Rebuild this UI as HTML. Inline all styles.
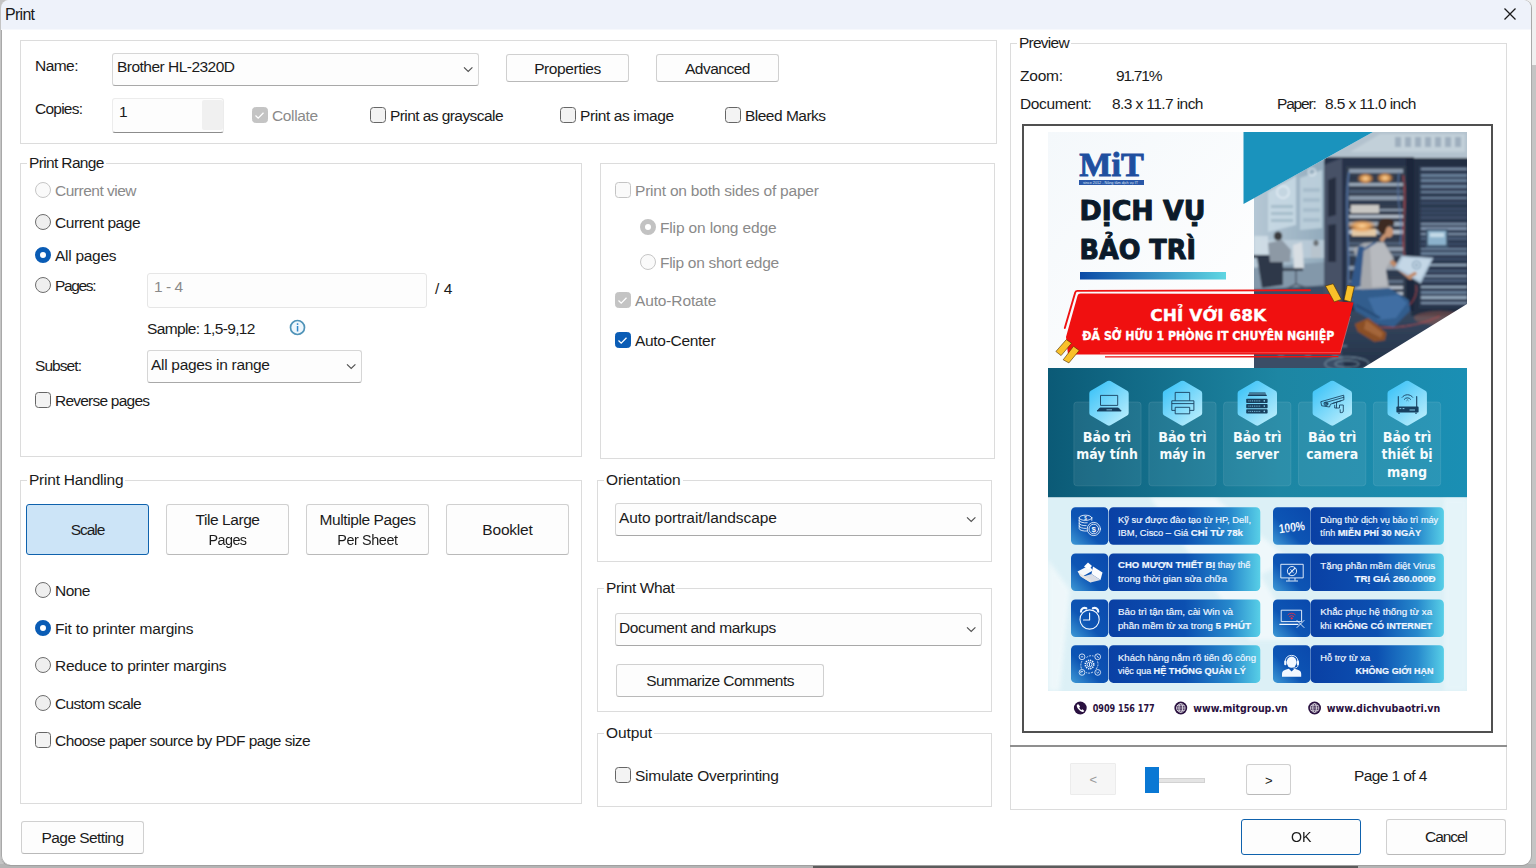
<!DOCTYPE html>
<html lang="en">
<head>
<meta charset="utf-8">
<title>Print</title>
<style>
*{box-sizing:border-box;margin:0;padding:0}
html,body{width:1536px;height:868px;overflow:hidden;background:#c4c4c4}
body{font-family:"Liberation Sans","DejaVu Sans",sans-serif;font-size:15px;color:#1a1a1a;position:relative}
.abs{position:absolute}
#desk-r{left:1522px;top:0;width:14px;height:65px;background:#f0f0f0}
#win{left:1px;top:0;width:1530px;height:865px;background:#fff;border-radius:8px 8px 9px 9px;overflow:hidden;box-shadow:inset 1px 0 0 #a9a9a9,1px 0 0 #a9a9a9,0 1px 0 #a0a0a0}
#title{left:0;top:0;width:1531px;height:29px;background:#eef2fa}
.t{position:absolute;white-space:nowrap;line-height:20px;height:20px;font-size:15.5px;letter-spacing:-0.35px;color:#1b1b1b}
.g{color:#8a8a8a}
.grp{position:absolute;border:1px solid #dcdcdc}
.gl{position:absolute;background:#fff;padding:0 2px;white-space:nowrap;line-height:20px;height:20px;font-size:15.5px;letter-spacing:-0.35px;color:#1b1b1b}
.btn{position:absolute;border:1px solid #d0d0d0;border-bottom-color:#b9b9b9;border-radius:3px;background:#fdfdfd;text-align:center;font-size:15.5px;letter-spacing:-0.35px;color:#1b1b1b;white-space:nowrap}
.dd{position:absolute;border:1px solid #d6d6d6;border-bottom-color:#a8a8a8;border-radius:3px;background:#fdfdfd}
.cb{position:absolute;width:16px;height:16px;margin-top:-1px;border:1px solid #666;border-radius:3.5px;background:#f3f3f3}
.cb.dis{border-color:#c4c4c4;background:#fafafa}
.cb.chk{background:#0a5cb5;border-color:#0a5cb5}
.cb.dchk{background:#c4c4c4;border-color:#c4c4c4}
.rd{position:absolute;width:16px;height:16px;border:1px solid #6e6e6e;border-radius:50%;background:#efefef}
.rd.dis{border-color:#c6c6c6;background:#fafafa}
.rd.on{border:5px solid #0a5cb5;background:#fff}
.rd.don{border:5px solid #c2c2c2;background:#fff}
svg{position:absolute;overflow:visible}
</style>
</head>
<body>
<div class="abs" id="desk-r"></div>
<div class="abs" style="left:0;top:864px;width:1536px;height:4px;background:#b4b4b4"></div>
<div class="abs" style="left:813px;top:864px;width:545px;height:4px;background:#5c5c5c"></div>
<div class="abs" id="win">
<div class="abs" id="title"></div>
<div class="abs" style="left:0;top:29px;width:1531px;height:1px;background:#f6f8fc"></div>
<div class="t" style="left:4px;top:5px;font-size:16px;letter-spacing:-0.72px">Print</div>
<svg style="left:1503px;top:8px" width="12" height="12" viewBox="0 0 12 12"><path d="M0.5 0.5L11.5 11.5M11.5 0.5L0.5 11.5" stroke="#1a1a1a" stroke-width="1.3" fill="none"/></svg>

<!-- top group -->
<div class="grp" style="left:19px;top:40px;width:977px;height:104px"></div>
<div class="t" style="left:34px;top:56px;letter-spacing:-0.54px">Name:</div>
<div class="dd" style="left:111px;top:53px;width:367px;height:33px"></div>
<div class="t" style="left:116px;top:57px;letter-spacing:-0.52px">Brother HL-2320D</div>
<svg style="left:461px;top:65px" width="12" height="8" viewBox="0 0 12 8"><path d="M2 2.3L6.2 6.5L10.4 2.3" stroke="#505050" stroke-width="1.15" fill="none"/></svg>
<div class="btn" style="left:505px;top:54px;width:123px;height:28px;line-height:27px;letter-spacing:-0.4px">Properties</div>
<div class="btn" style="left:655px;top:54px;width:123px;height:28px;line-height:27px;letter-spacing:-0.49px">Advanced</div>
<div class="t" style="left:34px;top:99px;letter-spacing:-0.76px">Copies:</div>
<div class="dd" style="left:111px;top:98px;width:112px;height:35px;border-color:#ececec;border-bottom-color:#8c8c8c"></div>
<div class="abs" style="left:201px;top:100px;width:21px;height:30px;background:#f0f0f0;border-radius:2px"></div>
<div class="t" style="left:118px;top:102px">1</div>
<div class="cb dchk" style="left:251px;top:108px"></div>
<svg style="left:253px;top:111px" width="11" height="9" viewBox="0 0 11 9"><path d="M1.5 4.5L4.2 7.2L9.5 1.8" stroke="#fff" stroke-width="1.3" fill="none"/></svg>
<div class="t g" style="left:271px;top:106px;letter-spacing:-0.37px">Collate</div>
<div class="cb" style="left:369px;top:108px"></div>
<div class="t" style="left:389px;top:106px;letter-spacing:-0.57px">Print as grayscale</div>
<div class="cb" style="left:559px;top:108px"></div>
<div class="t" style="left:579px;top:106px;letter-spacing:-0.39px">Print as image</div>
<div class="cb" style="left:724px;top:108px"></div>
<div class="t" style="left:744px;top:106px;letter-spacing:-0.51px">Bleed Marks</div>

<!-- Print Range -->
<div class="grp" style="left:19px;top:163px;width:562px;height:294px"></div>
<div class="gl" style="left:26px;top:153px;letter-spacing:-0.64px">Print Range</div>
<div class="rd dis" style="left:34px;top:182px"></div>
<div class="t g" style="left:54px;top:181px;letter-spacing:-0.5px">Current view</div>
<div class="rd" style="left:34px;top:214px"></div>
<div class="t" style="left:54px;top:213px;letter-spacing:-0.45px">Current page</div>
<div class="rd on" style="left:34px;top:247px"></div>
<div class="t" style="left:54px;top:246px;letter-spacing:-0.28px">All pages</div>
<div class="rd" style="left:34px;top:277px"></div>
<div class="t" style="left:54px;top:276px;letter-spacing:-1.35px">Pages:</div>
<div class="dd" style="left:146px;top:273px;width:280px;height:35px;border-color:#e6e6e6;background:#fdfdfd"></div>
<div class="t g" style="left:153px;top:277px;letter-spacing:-0.5px">1 - 4</div>
<div class="t" style="left:434px;top:279px;letter-spacing:0.13px">/ 4</div>
<div class="t" style="left:146px;top:319px;letter-spacing:-0.64px">Sample: 1,5-9,12</div>
<svg style="left:288px;top:319px" width="17" height="17" viewBox="0 0 17 17"><circle cx="8.5" cy="8.5" r="7" fill="#eef7fd" stroke="#4f93b8" stroke-width="1.7"/><rect x="7.8" y="7" width="1.5" height="5.5" fill="#2f86c9"/><rect x="7.8" y="4.3" width="1.5" height="1.6" fill="#2f86c9"/></svg>
<div class="t" style="left:34px;top:356px;letter-spacing:-0.93px">Subset:</div>
<div class="dd" style="left:146px;top:350px;width:215px;height:33px"></div>
<div class="t" style="left:150px;top:355px;letter-spacing:-0.3px">All pages in range</div>
<svg style="left:344px;top:362px" width="12" height="8" viewBox="0 0 12 8"><path d="M2 2.3L6.2 6.5L10.4 2.3" stroke="#505050" stroke-width="1.15" fill="none"/></svg>
<div class="cb" style="left:34px;top:393px"></div>
<div class="t" style="left:54px;top:391px;letter-spacing:-0.77px">Reverse pages</div>

<!-- Duplex group -->
<div class="grp" style="left:599px;top:163px;width:395px;height:296px"></div>
<div class="cb dis" style="left:614px;top:183px"></div>
<div class="t g" style="left:634px;top:181px;letter-spacing:-0.21px">Print on both sides of paper</div>
<div class="rd don" style="left:639px;top:219px"></div>
<div class="t g" style="left:659px;top:218px;letter-spacing:-0.15px">Flip on long edge</div>
<div class="rd dis" style="left:639px;top:254px"></div>
<div class="t g" style="left:659px;top:253px;letter-spacing:-0.29px">Flip on short edge</div>
<div class="cb dchk" style="left:614px;top:293px"></div>
<svg style="left:616px;top:296px" width="11" height="9" viewBox="0 0 11 9"><path d="M1.5 4.5L4.2 7.2L9.5 1.8" stroke="#fff" stroke-width="1.3" fill="none"/></svg>
<div class="t g" style="left:634px;top:291px;letter-spacing:-0.14px">Auto-Rotate</div>
<div class="cb chk" style="left:614px;top:333px"></div>
<svg style="left:616px;top:336px" width="11" height="9" viewBox="0 0 11 9"><path d="M1.5 4.5L4.2 7.2L9.5 1.8" stroke="#fff" stroke-width="1.3" fill="none"/></svg>
<div class="t" style="left:634px;top:331px;letter-spacing:-0.3px">Auto-Center</div>

<!-- Print Handling -->
<div class="grp" style="left:19px;top:480px;width:562px;height:324px"></div>
<div class="gl" style="left:26px;top:470px;letter-spacing:-0.22px">Print Handling</div>
<div class="btn" style="left:25px;top:504px;width:123px;height:51px;line-height:49px;background:#cce4f7;border-color:#0f62ad;letter-spacing:-1.07px">Scale</div>
<div class="btn" style="left:165px;top:504px;width:123px;height:51px;line-height:20px;padding-top:5px;letter-spacing:-0.43px">Tile Large<br><span style="display:inline-block;letter-spacing:-0.6px;transform:scaleX(0.93)">Pages</span></div>
<div class="btn" style="left:305px;top:504px;width:123px;height:51px;line-height:20px;padding-top:5px;letter-spacing:-0.4px">Multiple Pages<br><span style="display:inline-block;letter-spacing:-0.45px;transform:scaleX(0.93)">Per Sheet</span></div>
<div class="btn" style="left:445px;top:504px;width:123px;height:51px;line-height:49px;letter-spacing:-0.2px">Booklet</div>
<div class="rd" style="left:34px;top:582px"></div>
<div class="t" style="left:54px;top:581px;letter-spacing:-0.52px">None</div>
<div class="rd on" style="left:34px;top:620px"></div>
<div class="t" style="left:54px;top:619px;letter-spacing:-0.17px">Fit to printer margins</div>
<div class="rd" style="left:34px;top:657px"></div>
<div class="t" style="left:54px;top:656px;letter-spacing:-0.28px">Reduce to printer margins</div>
<div class="rd" style="left:34px;top:695px"></div>
<div class="t" style="left:54px;top:694px;letter-spacing:-0.67px">Custom scale</div>
<div class="cb" style="left:34px;top:733px"></div>
<div class="t" style="left:54px;top:731px;letter-spacing:-0.55px">Choose paper source by PDF page size</div>

<!-- Orientation -->
<div class="grp" style="left:596px;top:480px;width:395px;height:82px"></div>
<div class="gl" style="left:603px;top:470px;letter-spacing:-0.12px">Orientation</div>
<div class="dd" style="left:614px;top:503px;width:367px;height:33px"></div>
<div class="t" style="left:618px;top:508px;letter-spacing:-0.07px">Auto portrait/landscape</div>
<svg style="left:964px;top:515px" width="12" height="8" viewBox="0 0 12 8"><path d="M2 2.3L6.2 6.5L10.4 2.3" stroke="#505050" stroke-width="1.15" fill="none"/></svg>

<!-- Print What -->
<div class="grp" style="left:596px;top:588px;width:395px;height:124px"></div>
<div class="gl" style="left:603px;top:578px;letter-spacing:-0.39px">Print What</div>
<div class="dd" style="left:614px;top:613px;width:367px;height:33px"></div>
<div class="t" style="left:618px;top:618px;letter-spacing:-0.38px">Document and markups</div>
<svg style="left:964px;top:625px" width="12" height="8" viewBox="0 0 12 8"><path d="M2 2.3L6.2 6.5L10.4 2.3" stroke="#505050" stroke-width="1.15" fill="none"/></svg>
<div class="btn" style="left:615px;top:664px;width:208px;height:33px;line-height:31px;letter-spacing:-0.55px">Summarize Comments</div>

<!-- Output -->
<div class="grp" style="left:596px;top:733px;width:395px;height:74px"></div>
<div class="gl" style="left:603px;top:723px;letter-spacing:-0.07px">Output</div>
<div class="cb" style="left:614px;top:768px;background:#f3f3f3"></div>
<div class="t" style="left:634px;top:766px;letter-spacing:-0.26px">Simulate Overprinting</div>

<!-- bottom buttons -->
<div class="btn" style="left:20px;top:821px;width:123px;height:33px;line-height:31px;letter-spacing:-0.57px">Page Setting</div>
<div class="btn" style="left:1240px;top:819px;width:120px;height:36px;line-height:34px;border-color:#0f62ad;letter-spacing:0"><span style="display:inline-block;transform:scaleX(0.915)">OK</span></div>
<div class="btn" style="left:1385px;top:819px;width:120px;height:36px;line-height:34px;letter-spacing:-1.05px">Cancel</div>

<!-- Preview group -->
<div class="grp" style="left:1009px;top:43px;width:497px;height:767px"></div>
<div class="gl" style="left:1016px;top:33px;letter-spacing:-0.75px">Preview</div>
<div class="t" style="left:1019px;top:66px;letter-spacing:-0.23px">Zoom:</div>
<div class="t" style="left:1115px;top:66px;letter-spacing:-1.23px">91.71%</div>
<div class="t" style="left:1019px;top:94px;letter-spacing:-0.38px">Document:</div>
<div class="t" style="left:1111px;top:94px;letter-spacing:-0.59px">8.3 x 11.7 inch</div>
<div class="t" style="left:1276px;top:94px;letter-spacing:-1.17px">Paper:</div>
<div class="t" style="left:1324px;top:94px;letter-spacing:-0.59px">8.5 x 11.0 inch</div>
<div class="abs" style="left:1021px;top:124px;width:471px;height:609px;border:2px solid #505050;background:#fff"></div>
<!--PV-START-->
<svg style="left:1047px;top:132px" width="419" height="590" viewBox="1048 132 419 590" font-family="'Liberation Sans','DejaVu Sans',sans-serif">
<defs>
<linearGradient id="gBar" x1="0" x2="1" y1="0" y2="0"><stop offset="0" stop-color="#0b4aa6"/><stop offset="1" stop-color="#5fd6e2"/></linearGradient>
<linearGradient id="gBand" x1="0" x2="1" y1="0" y2="0"><stop offset="0" stop-color="#0b5a76"/><stop offset="0.55" stop-color="#1d86a3"/><stop offset="1" stop-color="#1a8fb4"/></linearGradient>
<linearGradient id="gHex" x1="0.1" x2="0.9" y1="0" y2="1"><stop offset="0" stop-color="#3fc4f8"/><stop offset="1" stop-color="#b6ecfc"/></linearGradient>
<linearGradient id="gPill" x1="0" x2="1" y1="0" y2="0"><stop offset="0" stop-color="#0a40a4"/><stop offset="0.5" stop-color="#0c50b1"/><stop offset="0.8" stop-color="#2688cc"/><stop offset="1" stop-color="#58cfe7"/></linearGradient>
<linearGradient id="gIco" x1="1" x2="0" y1="0" y2="1"><stop offset="0" stop-color="#0a49ad"/><stop offset="0.6" stop-color="#0d55b4"/><stop offset="1" stop-color="#3f9ad6"/></linearGradient>
<linearGradient id="gTop" x1="0" x2="1" y1="0" y2="1"><stop offset="0" stop-color="#f4f8fb"/><stop offset="1" stop-color="#ffffff"/></linearGradient>
<filter id="b1" x="-10%" y="-10%" width="120%" height="120%"><feGaussianBlur stdDeviation="0.8"/></filter>
<filter id="b2" x="-10%" y="-10%" width="120%" height="120%"><feGaussianBlur stdDeviation="2"/></filter>
<clipPath id="cPhoto"><polygon points="1254,198 1373,132 1467,132 1467,304 1363,368 1254,368"/></clipPath>
</defs>
<rect x="1048" y="132" width="419" height="590" fill="#fff"/>
<rect x="1048" y="132" width="206" height="236" fill="url(#gTop)"/>
<g clip-path="url(#cPhoto)">
<defs><linearGradient id="gFloor" x1="0" x2="0" y1="0" y2="1"><stop offset="0" stop-color="#45586f"/><stop offset="1" stop-color="#223047"/></linearGradient><linearGradient id="gWall" x1="0" x2="1" y1="0" y2="0"><stop offset="0" stop-color="#b7c9d6"/><stop offset="1" stop-color="#8fa8ba"/></linearGradient><radialGradient id="gGlow"><stop offset="0" stop-color="#ffd9a0"/><stop offset="0.5" stop-color="#f2a352" stop-opacity="0.85"/><stop offset="1" stop-color="#e08030" stop-opacity="0"/></radialGradient></defs>
<g filter="url(#b1)">
<rect x="1250" y="128" width="221" height="244" fill="#93abbc"/>
<polygon points="1250,128 1471,128 1471,160 1330,160 1250,205" fill="#b3c2ce"/>
<polygon points="1380,134 1465,134 1465,152 1350,152" fill="#c6d3dc" opacity="0.8"/>
<rect x="1395" y="137" width="6" height="10" fill="#8ea0b0" opacity="0.7"/>
<rect x="1405" y="137" width="6" height="10" fill="#8ea0b0" opacity="0.7"/>
<rect x="1415" y="137" width="6" height="10" fill="#8ea0b0" opacity="0.7"/>
<rect x="1425" y="137" width="6" height="10" fill="#8ea0b0" opacity="0.7"/>
<rect x="1435" y="137" width="6" height="10" fill="#8ea0b0" opacity="0.7"/>
<rect x="1445" y="137" width="6" height="10" fill="#8ea0b0" opacity="0.7"/>
<rect x="1455" y="137" width="6" height="10" fill="#8ea0b0" opacity="0.7"/>
<rect x="1250" y="160" width="80" height="135" fill="url(#gWall)"/>
<polygon points="1268,192 1296,176 1296,225 1268,232" fill="#c9dae5" opacity="0.85"/>
<polygon points="1300,178 1322,170 1322,228 1300,230" fill="#bfd2de" opacity="0.85"/>
<circle cx="1283" cy="192" r="6" fill="none" stroke="#e6f0f6" stroke-width="1.5" opacity="0.9"/>
<circle cx="1312" cy="172" r="3.5" fill="none" stroke="#e6f0f6" stroke-width="1.2" opacity="0.9"/>
<rect x="1271" y="205" width="22" height="3" fill="#9fb6c6" opacity="0.8"/>
<rect x="1271" y="212" width="22" height="3" fill="#9fb6c6" opacity="0.8"/>
<rect x="1271" y="219" width="22" height="3" fill="#9fb6c6" opacity="0.8"/>
<rect x="1303" y="188" width="17" height="4" fill="#a3b9c8" opacity="0.8"/>
<rect x="1303" y="198" width="17" height="4" fill="#a3b9c8" opacity="0.8"/>
<rect x="1303" y="208" width="17" height="4" fill="#a3b9c8" opacity="0.8"/>
<rect x="1303" y="218" width="17" height="4" fill="#a3b9c8" opacity="0.8"/>
<rect x="1254" y="240" width="70" height="18" fill="#c3d3de" opacity="0.7"/>
<polygon points="1250,284 1330,270 1471,300 1471,372 1250,372" fill="url(#gFloor)"/>
<polygon points="1250,268 1325,262 1325,300 1250,300" fill="#8398aa"/>
<polygon points="1250,290 1330,285 1345,372 1250,372" fill="#3b4d66"/>
<ellipse cx="1347" cy="364" rx="22" ry="7" fill="none" stroke="#9fc0d0" stroke-width="0.9" opacity="0.8"/>
<ellipse cx="1347" cy="364" rx="12" ry="3.6" fill="none" stroke="#9fc0d0" stroke-width="0.8" opacity="0.8"/>
<rect x="1260" y="345" width="6" height="2" fill="#7f96ab" opacity="0.55"/>
<rect x="1269" y="350" width="6" height="2" fill="#7f96ab" opacity="0.55"/>
<rect x="1278" y="355" width="6" height="2" fill="#7f96ab" opacity="0.55"/>
<rect x="1287" y="345" width="6" height="2" fill="#7f96ab" opacity="0.55"/>
<rect x="1296" y="350" width="6" height="2" fill="#7f96ab" opacity="0.55"/>
<rect x="1305" y="355" width="6" height="2" fill="#7f96ab" opacity="0.55"/>
<rect x="1314" y="345" width="6" height="2" fill="#7f96ab" opacity="0.55"/>
<rect x="1323" y="350" width="6" height="2" fill="#7f96ab" opacity="0.55"/>
<rect x="1332" y="355" width="6" height="2" fill="#7f96ab" opacity="0.55"/>
<rect x="1341" y="345" width="6" height="2" fill="#7f96ab" opacity="0.55"/>
<rect x="1250" y="255" width="34" height="3" fill="#2b3646"/>
<rect x="1254" y="236" width="14" height="18" fill="#cfdde6" opacity="0.9"/>
<polygon points="1257,258 1283,258 1283,285 1262,288" fill="#2d3848"/>
<polygon points="1268,243 1282,240 1291,250 1290,262 1270,262" fill="#8d99a5"/>
<ellipse cx="1278" cy="236" rx="4.2" ry="4.6" fill="#3b3a3c"/>
<polygon points="1293,245 1302,242 1304,268 1294,270" fill="#d8dee3"/>
<rect x="1283" y="268" width="20" height="3" fill="#3a4656"/>
<path d="M1296,271 L1296,285 M1286,289 L1296,284 L1307,288" stroke="#4a5666" stroke-width="1.4" fill="none"/>
<ellipse cx="1316" cy="243" rx="2.6" ry="3" fill="#6b6e72"/><rect x="1311" y="246" width="10" height="12" fill="#b8c4cd"/>
<rect x="1411" y="158" width="60" height="158" fill="#222d42"/>
<rect x="1419" y="166" width="52" height="142" fill="#2a3850"/>
<rect x="1421" y="168.0" width="46" height="2" fill="#8499b0" opacity="0.9"/>
<rect x="1421" y="174.0" width="46" height="3" fill="#6f86a0" opacity="0.9"/>
<rect x="1421" y="179.0" width="46" height="3" fill="#6f86a0" opacity="0.9"/>
<rect x="1421" y="185.0" width="46" height="3" fill="#6f86a0" opacity="0.9"/>
<rect x="1421" y="191.0" width="46" height="2" fill="#6f86a0" opacity="0.9"/>
<rect x="1421" y="197.0" width="46" height="2" fill="#6f86a0" opacity="0.9"/>
<rect x="1421" y="202.0" width="46" height="2" fill="#3f5069" opacity="0.9"/>
<rect x="1421" y="208.0" width="46" height="2" fill="#3f5069" opacity="0.9"/>
<rect x="1421" y="212.0" width="46" height="2" fill="#3f5069" opacity="0.9"/>
<rect x="1421" y="216.0" width="46" height="3" fill="#3f5069" opacity="0.9"/>
<rect x="1421" y="223.0" width="46" height="2" fill="#8499b0" opacity="0.9"/>
<rect x="1421" y="227.0" width="46" height="3" fill="#8499b0" opacity="0.9"/>
<rect x="1421" y="233.0" width="46" height="2" fill="#8499b0" opacity="0.9"/>
<rect x="1421" y="237.0" width="46" height="3" fill="#4d607a" opacity="0.9"/>
<rect x="1421" y="243.0" width="46" height="2" fill="#3f5069" opacity="0.9"/>
<rect x="1421" y="248.0" width="46" height="2" fill="#6f86a0" opacity="0.9"/>
<rect x="1421" y="252.0" width="46" height="3" fill="#6f86a0" opacity="0.9"/>
<rect x="1421" y="258.0" width="46" height="2" fill="#3f5069" opacity="0.9"/>
<rect x="1421" y="264.0" width="46" height="2" fill="#9cb1c5" opacity="0.9"/>
<rect x="1421" y="270.0" width="46" height="2" fill="#4d607a" opacity="0.9"/>
<rect x="1421" y="275.0" width="46" height="2" fill="#8499b0" opacity="0.9"/>
<rect x="1421" y="279.0" width="46" height="3" fill="#4d607a" opacity="0.9"/>
<rect x="1421" y="286.0" width="46" height="2" fill="#9cb1c5" opacity="0.9"/>
<rect x="1421" y="291.0" width="46" height="3" fill="#6f86a0" opacity="0.9"/>
<rect x="1421" y="296.0" width="46" height="3" fill="#9cb1c5" opacity="0.9"/>
<rect x="1421" y="302.0" width="46" height="2" fill="#8499b0" opacity="0.9"/>
<rect x="1426" y="229" width="22" height="19" fill="#41566f"/>
<rect x="1428" y="231" width="18" height="14" fill="#8cb2cc"/>
<rect x="1430" y="233" width="14" height="4" fill="#c4dbe8"/>
<rect x="1324" y="157" width="90" height="154" fill="#263248"/>
<polygon points="1324,165 1342,158 1342,305 1324,296" fill="#465166"/>
<polygon points="1328,180 1336,177 1336,215 1328,217" fill="#272f40"/>
<polygon points="1328,225 1336,224 1336,262 1328,262" fill="#272f40"/>
<rect x="1346" y="166" width="60" height="138" fill="#323d50"/>
<rect x="1349" y="169.0" width="54" height="4" fill="#8a99ab"/>
<rect x="1349" y="177.0" width="54" height="2" fill="#2a3447"/>
<rect x="1349" y="183.0" width="54" height="3" fill="#9aa8b8"/>
<rect x="1349" y="190.0" width="54" height="3" fill="#4d5d74"/>
<rect x="1349" y="196.0" width="54" height="4" fill="#8a99ab"/>
<rect x="1349" y="202.0" width="54" height="3" fill="#2f3b4f"/>
<rect x="1349" y="209.0" width="54" height="2" fill="#8a99ab"/>
<rect x="1349" y="215.0" width="54" height="3" fill="#b0bac6"/>
<rect x="1349" y="222.0" width="54" height="4" fill="#9aa8b8"/>
<rect x="1349" y="230.0" width="54" height="4" fill="#b0bac6"/>
<rect x="1349" y="237.0" width="54" height="2" fill="#2f3b4f"/>
<rect x="1349" y="242.0" width="54" height="3" fill="#4d5d74"/>
<rect x="1349" y="247.0" width="54" height="4" fill="#8a99ab"/>
<rect x="1349" y="253.0" width="54" height="3" fill="#5f6f85"/>
<rect x="1349" y="260.0" width="54" height="3" fill="#2f3b4f"/>
<rect x="1349" y="266.0" width="54" height="4" fill="#8a99ab"/>
<rect x="1349" y="272.0" width="54" height="4" fill="#2f3b4f"/>
<rect x="1349" y="280.0" width="54" height="3" fill="#5f6f85"/>
<rect x="1349" y="286.0" width="54" height="3" fill="#b0bac6"/>
<rect x="1349" y="292.0" width="54" height="3" fill="#b0bac6"/>
<rect x="1349" y="298.0" width="54" height="3" fill="#5f6f85"/>
<rect x="1351" y="205" width="28" height="8" fill="#c9c8c4"/>
<rect x="1352" y="229" width="24" height="7" fill="#e3c9a6"/>
<path d="M1349,172 C1343,210 1352,250 1347,298" stroke="#5577aa" stroke-width="1.5" fill="none"/>
<path d="M1403,175 C1408,200 1400,230 1405,262" stroke="#b04040" stroke-width="1" fill="none"/>
<path d="M1399,172 C1395,200 1404,220 1400,245" stroke="#5577aa" stroke-width="1" fill="none"/>
<ellipse cx="1365.5" cy="178.5" rx="9" ry="6" fill="url(#gGlow)"/>
<ellipse cx="1385" cy="178" rx="9" ry="6" fill="url(#gGlow)"/>
<ellipse cx="1362" cy="226" rx="15" ry="6.5" fill="url(#gGlow)"/>
<rect x="1406" y="158" width="8" height="153" fill="#1e283b"/>
<ellipse cx="1440" cy="318" rx="26" ry="7" fill="#c46a50" opacity="0.35"/>
<path d="M1416,285 C1420,305 1395,318 1372,326 C1390,330 1420,326 1440,316" stroke="#c24a4a" stroke-width="0.8" fill="none"/>
<polygon points="1349.6,289.4 1389.3,287.9 1408.8,299.9 1410.3,310.4 1393.8,326.9 1377.3,323.9 1354.8,310.4" fill="#335d8d"/>
<polygon points="1368,298 1398,295 1407,303 1396,318 1378,320" fill="#3f6ea3"/>
<path d="M1356,305 L1380,318" stroke="#274a75" stroke-width="2" fill="none"/>
<polygon points="1354.8,323.9 1368.3,317.9 1386.3,332.9 1384.8,340.3 1374.3,341.8 1357.8,331.4" fill="#8b4f28"/>
<polygon points="1366,320 1383,333 1381,338 1364,329" fill="#a4663a"/>
<polygon points="1353.3,249 1363.8,243 1383.3,241.5 1393.8,258 1392.3,268.5 1385.5,268.5 1389.3,287.9 1360.8,289.4 1357.8,262.5" fill="#a5a8ad"/>
<polygon points="1370,244 1384,243 1392,258 1386,268 1387,286 1372,287" fill="#b7babf"/>
<polygon points="1358.5,246 1364,246.5 1360.2,286.5 1349.8,289.4" fill="#31598a"/>
<path d="M1376,242 L1363,250" stroke="#31598a" stroke-width="2"/>
<path d="M1392.3,262.5 L1410.3,277.4" stroke="#c08a68" stroke-width="4.4" stroke-linecap="round"/>
<ellipse cx="1388.6" cy="232" rx="4.6" ry="5.6" fill="#c6926f"/>
<path d="M1381,241 L1386,234" stroke="#c6926f" stroke-width="4"/>
<path d="M1377.5,229 C1376,218 1388,215 1393.5,221 C1395,224 1394,226 1392,226 C1388,225 1386,227 1385,234 C1381,235 1378.5,233 1377.5,229 Z" fill="#3d2b22"/>
<polygon points="1401.3,255.7 1433.5,257.7 1420.7,283.4 1394.5,267.7" fill="#a9c0d4"/>
<polygon points="1403,257.5 1431,259.3 1420,280.5 1397.5,267.3" fill="#c4d7e6"/>
<circle cx="1416.5" cy="265" r="4" fill="none" stroke="#7d9ab2" stroke-width="1"/>
<circle cx="1416.5" cy="265" r="1.6" fill="#8fa9be"/>
<path d="M1409,277 L1415,273.5" stroke="#c08a68" stroke-width="3.4" stroke-linecap="round"/>
</g></g>
<polygon points="1243.5,132 1373,132 1243.5,204" fill="#1a93bd"/>
<text x="1079.3" y="175.6" font-family="'Liberation Serif','DejaVu Serif',serif" font-weight="bold" font-size="33" fill="#1f4f9f" stroke="#1f4f9f" stroke-width="0.9" textLength="64.5" lengthAdjust="spacingAndGlyphs">MiT</text>
<rect x="1079" y="180" width="65" height="5" fill="#2a58a8"/>
<text x="1083" y="184" font-family="Liberation Sans,sans-serif" font-size="3.6" fill="#dfe8f6" textLength="55" lengthAdjust="spacingAndGlyphs">since 2012 - Nâng tầm dịch vụ IT</text>
<g font-family="'DejaVu Sans','Liberation Sans',sans-serif" font-weight="bold" fill="#0b1a2a" stroke="#0b1a2a" stroke-width="1" stroke-linejoin="round" font-size="27">
<text x="1079.5" y="220" textLength="126" lengthAdjust="spacingAndGlyphs">DỊCH VỤ</text>
<text x="1079.5" y="258.6" textLength="116.5" lengthAdjust="spacingAndGlyphs">BẢO TRÌ</text>
</g>
<rect x="1080" y="272" width="146" height="7.5" fill="url(#gBar)"/>
<g>
<path d="M1080.5,293.5 L1329,294 L1339,301.5 L1353.5,302.5 L1340.2,354.6 L1068,354.6 L1066,337 L1077.6,295.4 Q1078.2,293.5 1080.5,293.5 Z" fill="#f01010"/>
<path d="M1064.8,328 L1075.2,292.5 Q1075.8,290.9 1077.5,290.9 L1310,290.3" stroke="#ee1212" stroke-width="1.9" fill="none" stroke-linecap="round"/><path d="M1105,356.9 L1338.5,356.7" stroke="#ee1212" stroke-width="1.3" fill="none"/><path d="M1350.5,316 L1340.4,352.6 L1100,352.9" stroke="#ff8d8d" stroke-width="0.6" fill="none" opacity="0.8"/>
<g fill="#f9c12a" stroke="#4a2c00" stroke-width="0.6">
<polygon points="1325.4,285.9 1333.2,283.8 1341.5,299.4 1334.2,301.9"/>
<polygon points="1347.2,285.4 1354.4,286.4 1350.8,301.9 1344,299.9"/>
<polygon points="1055.9,351.5 1066.3,339.6 1071.5,343.2 1061.1,355.6"/>
<polygon points="1063.2,359.8 1073.5,346.3 1079.2,350.5 1068.9,362.9"/>
</g>
<g font-family="'DejaVu Sans','Liberation Sans',sans-serif" font-weight="bold" fill="#fff" stroke="#fff" stroke-width="0.35" text-anchor="middle">
<text x="1208.3" y="321.4" font-size="16.6" textLength="116" lengthAdjust="spacingAndGlyphs">CHỈ VỚI 68K</text>
<text x="1208.3" y="339.7" font-size="12" textLength="252" lengthAdjust="spacingAndGlyphs">ĐÃ SỞ HỮU 1 PHÒNG IT CHUYÊN NGHIỆP</text>
</g></g>
<rect x="1048" y="368" width="419" height="129.5" fill="url(#gBand)"/>
<rect x="1073.8" y="402" width="67.3" height="83.8" rx="3" fill="#ffffff" fill-opacity="0.07" stroke="#ffffff" stroke-opacity="0.16" stroke-width="0.6"/>
<rect x="1148.8" y="402" width="67.3" height="83.8" rx="3" fill="#ffffff" fill-opacity="0.07" stroke="#ffffff" stroke-opacity="0.16" stroke-width="0.6"/>
<rect x="1223.6" y="402" width="67.3" height="83.8" rx="3" fill="#ffffff" fill-opacity="0.07" stroke="#ffffff" stroke-opacity="0.16" stroke-width="0.6"/>
<rect x="1298.5" y="402" width="67.3" height="83.8" rx="3" fill="#ffffff" fill-opacity="0.07" stroke="#ffffff" stroke-opacity="0.16" stroke-width="0.6"/>
<rect x="1373.4" y="402" width="67.3" height="83.8" rx="3" fill="#ffffff" fill-opacity="0.07" stroke="#ffffff" stroke-opacity="0.16" stroke-width="0.6"/>
<polygon points="1109.0,383.7 1125.7,393.4 1125.7,412.9 1109.0,422.7 1092.3,412.9 1092.3,393.4" fill="url(#gHex)" stroke="url(#gHex)" stroke-width="6" stroke-linejoin="round"/>
<polygon points="1182.5,383.7 1199.2,393.4 1199.2,412.9 1182.5,422.7 1165.8,412.9 1165.8,393.4" fill="url(#gHex)" stroke="url(#gHex)" stroke-width="6" stroke-linejoin="round"/>
<polygon points="1257.3,383.7 1274.0,393.4 1274.0,412.9 1257.3,422.7 1240.6,412.9 1240.6,393.4" fill="url(#gHex)" stroke="url(#gHex)" stroke-width="6" stroke-linejoin="round"/>
<polygon points="1332.3,383.7 1349.0,393.4 1349.0,412.9 1332.3,422.7 1315.6,412.9 1315.6,393.4" fill="url(#gHex)" stroke="url(#gHex)" stroke-width="6" stroke-linejoin="round"/>
<polygon points="1407.2,383.7 1423.9,393.4 1423.9,412.9 1407.2,422.7 1390.5,412.9 1390.5,393.4" fill="url(#gHex)" stroke="url(#gHex)" stroke-width="6" stroke-linejoin="round"/>
<g fill="none" stroke="#17405f" stroke-width="0.9" stroke-linejoin="round">
<rect x="1100.5" y="395.4" width="17.2" height="10" />
<polygon points="1099.8,408 1118.4,408 1121.2,411 1097,411" fill="#17405f"/>
<path d="M1106.5,409.8 h5.5" stroke="#9fdcf5" stroke-width="0.7"/>
<rect x="1175.2" y="392.4" width="14.5" height="8.4"/>
<path d="M1175.2,400.8 H1171.8 V410.4 H1175.2 M1189.7,400.8 H1193.9 V410.4 H1189.7 M1171.8,403.6 H1193.9"/>
<rect x="1175.2" y="407.3" width="14.5" height="6.5"/>
</g>
<g fill="#17405f">
<polygon points="1249.3,392.4 1265.3,392.4 1267,396 1247.6,396"/>
<rect x="1247.6" y="393.6" width="19.4" height="0.7" fill="#8fd6f3"/>
<rect x="1246.2" y="398.8" width="21.4" height="4.3" rx="0.8"/>
<path d="M1248.5,400.9 h12" stroke="#8fd6f3" stroke-width="0.9" stroke-dasharray="0.9 0.9" fill="none"/>
<circle cx="1264.3" cy="400.9" r="0.8" fill="#8fd6f3"/>
<rect x="1246.2" y="404.0" width="21.4" height="4.3" rx="0.8"/>
<path d="M1248.5,406.1 h12" stroke="#8fd6f3" stroke-width="0.9" stroke-dasharray="0.9 0.9" fill="none"/>
<circle cx="1264.3" cy="406.1" r="0.8" fill="#8fd6f3"/>
<rect x="1246.2" y="409.3" width="21.4" height="4.3" rx="0.8"/>
<path d="M1248.5,411.4 h12" stroke="#8fd6f3" stroke-width="0.9" stroke-dasharray="0.9 0.9" fill="none"/>
<circle cx="1264.3" cy="411.4" r="0.8" fill="#8fd6f3"/>
</g>
<g fill="none" stroke="#17405f" stroke-width="0.85" stroke-linejoin="round" stroke-linecap="round">
<path d="M1321.2,401.6 L1343.7,395.2 L1343.9,399.8 L1330.5,404.2 L1329.5,407 L1322,405.8 Z"/>
<path d="M1324,403 L1343.8,397.3 M1333,403.2 L1341,400.8"/>
<circle cx="1326" cy="403.9" r="1.9"/><circle cx="1326" cy="403.9" r="0.7"/>
<path d="M1336.5,402.5 V408 H1334.7 V405.2 M1336.5,408 H1339.5 V405 H1343.3 V411 Q1343.3,412.6 1341.7,412.6 H1340.2 V409.8"/>
</g>
<g fill="#17405f" stroke="#17405f">
<rect x="1396.4" y="406.6" width="22.2" height="6" rx="0.8" stroke="none"/>
<path d="M1398.3,396.6 V407 M1416.7,396.6 V407" stroke-width="1.1" fill="none" stroke-linecap="round"/>
<path d="M1399,412.5 v1.6 M1416,412.5 v1.6" stroke-width="1.2" fill="none"/>
<path d="M1402.2,397.3 A6.4,6.4 0 0 1 1412.7,397.3 M1404.3,399.3 A3.8,3.8 0 0 1 1410.6,399.3" stroke-width="0.9" fill="none" stroke-linecap="round"/>
<path d="M1406.5,400.8 L1407.45,399.9 L1408.4,400.8" stroke-width="0.7" fill="none"/>
<path d="M1399.5,408.6 h1.8 M1402.6,408.6 h1.8 M1409.5,410 h5.5" stroke="#8fd6f3" stroke-width="0.9" fill="none"/>
</g>
<g font-family="'DejaVu Sans','Liberation Sans',sans-serif" font-weight="bold" fill="#f4fbfd" text-anchor="middle" font-size="13.3">
<text x="1107.0" y="441.7" textLength="48.5" lengthAdjust="spacingAndGlyphs">Bảo trì</text>
<text x="1107.0" y="459.4" textLength="61.6" lengthAdjust="spacingAndGlyphs">máy tính</text>
<text x="1182.4" y="441.7" textLength="48.5" lengthAdjust="spacingAndGlyphs">Bảo trì</text>
<text x="1182.4" y="459.4" textLength="46.0" lengthAdjust="spacingAndGlyphs">máy in</text>
<text x="1257.3" y="441.7" textLength="48.5" lengthAdjust="spacingAndGlyphs">Bảo trì</text>
<text x="1257.3" y="459.4" textLength="43.0" lengthAdjust="spacingAndGlyphs">server</text>
<text x="1332.2" y="441.7" textLength="48.5" lengthAdjust="spacingAndGlyphs">Bảo trì</text>
<text x="1332.2" y="459.4" textLength="52.0" lengthAdjust="spacingAndGlyphs">camera</text>
<text x="1407.1" y="441.7" textLength="48.5" lengthAdjust="spacingAndGlyphs">Bảo trì</text>
<text x="1407.1" y="459.4" textLength="51.0" lengthAdjust="spacingAndGlyphs">thiết bị</text>
<text x="1407.1" y="477.1" textLength="40.0" lengthAdjust="spacingAndGlyphs">mạng</text>
</g>
<rect x="1048" y="497.5" width="419" height="193.5" fill="#dcf0f6"/>
<clipPath id="cLight"><rect x="1048" y="497.5" width="419" height="193.5"/></clipPath><g clip-path="url(#cLight)"><g filter="url(#b2)" opacity="0.75"><polygon points="1150,497.5 1215,497.5 1290,560 1260,575 1300,640 1250,640" fill="#f6fbfd"/><polygon points="1048,560 1070,590 1060,691 1048,691" fill="#f4fafc"/><rect x="1444" y="497.5" width="23" height="193.5" fill="#e9f6fa"/></g></g>
<rect x="1071.0" y="507.2" width="37.3" height="37.6" rx="4.5" fill="url(#gIco)"/>
<rect x="1108.9" y="507.2" width="151.4" height="37.6" rx="4.5" fill="url(#gPill)"/>
<rect x="1273.0" y="507.2" width="37.3" height="37.6" rx="4.5" fill="url(#gIco)"/>
<rect x="1310.5" y="507.2" width="133.4" height="37.6" rx="4.5" fill="url(#gPill)"/>
<rect x="1071.0" y="553.4" width="37.3" height="37.6" rx="4.5" fill="url(#gIco)"/>
<rect x="1108.9" y="553.4" width="151.4" height="37.6" rx="4.5" fill="url(#gPill)"/>
<rect x="1273.0" y="553.4" width="37.3" height="37.6" rx="4.5" fill="url(#gIco)"/>
<rect x="1310.5" y="553.4" width="133.4" height="37.6" rx="4.5" fill="url(#gPill)"/>
<rect x="1071.0" y="599.5" width="37.3" height="37.6" rx="4.5" fill="url(#gIco)"/>
<rect x="1108.9" y="599.5" width="151.4" height="37.6" rx="4.5" fill="url(#gPill)"/>
<rect x="1273.0" y="599.5" width="37.3" height="37.6" rx="4.5" fill="url(#gIco)"/>
<rect x="1310.5" y="599.5" width="133.4" height="37.6" rx="4.5" fill="url(#gPill)"/>
<rect x="1071.0" y="645.3" width="37.3" height="37.6" rx="4.5" fill="url(#gIco)"/>
<rect x="1108.9" y="645.3" width="151.4" height="37.6" rx="4.5" fill="url(#gPill)"/>
<rect x="1273.0" y="645.3" width="37.3" height="37.6" rx="4.5" fill="url(#gIco)"/>
<rect x="1310.5" y="645.3" width="133.4" height="37.6" rx="4.5" fill="url(#gPill)"/>
<g fill="none" stroke="#f2f8ff" stroke-width="0.85" stroke-linecap="round" stroke-linejoin="round">
<ellipse cx="1085.5" cy="517.8" rx="6.3" ry="2.6"/>
<path d="M1079.2,517.8 v2.7 a6.3,2.6 0 0 0 8,2.3 M1079.2,520.5 v2.7 a6.3,2.6 0 0 0 7,2.5 M1079.2,523.2 v2.7 a6.3,2.6 0 0 0 7,2.5 M1079.2,525.9 v2.7 a6.3,2.6 0 0 0 8,2.4 M1091.8,517.8 v2.6"/>
<circle cx="1093.8" cy="529" r="6.6" fill="#0d52b2"/><circle cx="1093.8" cy="529" r="4.8"/>
</g>
<text x="1093.8" y="532" font-size="8" font-weight="bold" fill="#f2f8ff" text-anchor="middle">$</text>
<text x="1085.5" y="519.6" font-size="4.6" font-weight="bold" fill="#f2f8ff" text-anchor="middle">$</text>
<g stroke="none">
<polygon points="1077.5,571.5 1089,565.5 1093,570.5 1081.5,577" fill="#f4f7fb"/>
<polygon points="1093,566.5 1102.5,572.5 1100.5,580 1091.5,574" fill="#fbfcfe"/>
<polygon points="1081.5,577 1091.5,574 1100.5,580 1090.5,582.5" fill="#d9dde6"/>
<polygon points="1084,566.5 1088,562.5 1092,566 1088.5,569.5" fill="#ffffff"/>
<polygon points="1078.5,572.5 1090.5,579.5 1090.5,582.5 1080,576" fill="#e9e6e3"/>
</g>
<g fill="none" stroke="#f2f8ff" stroke-width="1.1" stroke-linecap="round" stroke-linejoin="round">
<circle cx="1089.6" cy="619.5" r="9.6"/>
<path d="M1089.6,613 V620 H1083.5"/>
<path d="M1081,611.6 A3.6,3.6 0 0 1 1086.3,608.3 M1098.2,611.6 A3.6,3.6 0 0 0 1092.9,608.3" stroke-width="2.2"/>
</g>
<g fill="none" stroke="#f2f8ff" stroke-width="0.8">
<circle cx="1089.5" cy="664.5" r="4.2" stroke-width="1.6" stroke-dasharray="1.3 0.9"/><circle cx="1089.5" cy="664.5" r="2.4"/>
<path d="M1089.5,662.8 v3.2" stroke-width="0.9"/>
<circle cx="1082.0" cy="656.8" r="2.9"/>
<circle cx="1097.7" cy="656.8" r="2.9"/>
<circle cx="1082.0" cy="672.4" r="2.9"/>
<circle cx="1097.7" cy="672.4" r="2.9"/>
<path d="M1080.8,656.8 h2.4 M1096.7,655.6 l2,2.4 M1080.8,673.2 v-1.6 h2.2 M1096.5,672 l1.2,1 l1.3,-1.2"/>
<path d="M1086.5,657.5 q3,-2.5 7,-1.5 M1097.5,661.5 q1.5,4 -1.5,7.5 M1093,672 q-3.5,2 -7,0.5 M1081.5,668.5 q-1.5,-4 0.5,-7.5" stroke-dasharray="2 1"/>
</g>
<text x="1291.8" y="531.6" font-size="12.6" font-weight="bold" fill="#f2f8ff" text-anchor="middle" textLength="26" lengthAdjust="spacingAndGlyphs" transform="rotate(-7 1291.8 527)">100%</text>
<text x="1289.5" y="531.4" font-size="3.2" font-weight="bold" fill="#0d52b2" text-anchor="middle" transform="rotate(-7 1289.5 531)">FREE</text>
<g fill="none" stroke="#f2f8ff" stroke-width="0.9" stroke-linejoin="round">
<rect x="1280.8" y="564.3" width="22.4" height="13.6"/>
<path d="M1289,578 v2.6 M1295,578 v2.6 M1286,581 h12" />
<circle cx="1292" cy="571.1" r="4.6"/><path d="M1288.8,574.3 L1295.2,567.9" stroke-width="1.1"/><path d="M1290.3,569 l3.4,4.2" stroke-width="0.7"/>
</g>
<g fill="none" stroke="#f2f8ff" stroke-width="0.9" stroke-linejoin="round" stroke-linecap="round">
<rect x="1281.6" y="610.2" width="20" height="11.4"/>
<path d="M1279.8,624.3 H1298" stroke-width="1.2"/>
<path d="M1297,620.5 L1304,627.5 M1304,620.5 L1297,627.5" stroke-width="0.9"/>
</g>
<g fill="none" stroke="#e0304a" stroke-width="0.9" stroke-linecap="round"><path d="M1288,614.6 A5,5 0 0 1 1295.2,614.6 M1289.5,616.4 A3,3 0 0 1 1293.7,616.4"/><circle cx="1291.6" cy="618.3" r="0.7" fill="#e0304a"/></g>
<g fill="#f2f8ff" stroke="none">
<ellipse cx="1291.6" cy="662.2" rx="4.9" ry="5.6"/>
<path d="M1282,676.8 v-3 q0,-3.2 4.2,-4.2 l2.6,-0.8 l2.8,2.6 l2.8,-2.6 l2.6,0.8 q4.2,1 4.2,4.2 v3 z"/>
<rect x="1284.2" y="660.5" width="2.2" height="4.8" rx="1"/><rect x="1296.8" y="660.5" width="2.2" height="4.8" rx="1"/>
</g>
<path d="M1285.2,661 A6.5,6.8 0 0 1 1298,661 M1298,665 q0,3 -4.5,3.2" fill="none" stroke="#f2f8ff" stroke-width="0.9"/>
<g fill="#eef6ff" stroke="#eef6ff" stroke-width="0.18" font-size="8.9">
<text x="1118.0" y="523.0" textLength="133.0" lengthAdjust="spacingAndGlyphs">Kỹ sư được đào tạo từ HP, Dell,</text>
<text x="1118.0" y="535.9" textLength="125.0" lengthAdjust="spacingAndGlyphs">IBM, Cisco – Giá <tspan font-weight="bold" font-size="9.2">CHỈ TỪ 78k</tspan></text>
<text x="1118.0" y="568.3" textLength="132.5" lengthAdjust="spacingAndGlyphs"><tspan font-weight="bold" font-size="9.2">CHO MƯỢN THIẾT BỊ</tspan> thay thế</text>
<text x="1118.0" y="582.0" textLength="109.0" lengthAdjust="spacingAndGlyphs">trong thời gian sửa chữa</text>
<text x="1118.0" y="615.0" textLength="115.0" lengthAdjust="spacingAndGlyphs">Bảo trì tận tâm, cài Win và</text>
<text x="1118.0" y="628.7" textLength="133.0" lengthAdjust="spacingAndGlyphs">phần mềm từ xa trong <tspan font-weight="bold" font-size="9.2">5 PHÚT</tspan></text>
<text x="1118.0" y="661.0" textLength="138.0" lengthAdjust="spacingAndGlyphs">Khách hàng nắm rõ tiến độ công</text>
<text x="1118.0" y="674.0" textLength="128.0" lengthAdjust="spacingAndGlyphs">việc qua <tspan font-weight="bold" font-size="9.2">HỆ THỐNG QUẢN LÝ</tspan></text>
<text x="1320.2" y="523.0" textLength="118.0" lengthAdjust="spacingAndGlyphs">Dùng thử dịch vụ bảo trì máy</text>
<text x="1320.2" y="535.9" textLength="101.0" lengthAdjust="spacingAndGlyphs">tính <tspan font-weight="bold" font-size="9.2">MIỄN PHÍ 30 NGÀY</tspan></text>
<text x="1320.2" y="569.0" textLength="115.0" lengthAdjust="spacingAndGlyphs">Tặng phần mềm diệt Virus</text>
<text x="1435.5" y="582.0" textLength="81.0" lengthAdjust="spacingAndGlyphs" text-anchor="end"><tspan font-weight="bold" font-size="9.2">TRỊ GIÁ 260.000Đ</tspan></text>
<text x="1320.2" y="615.0" textLength="112.0" lengthAdjust="spacingAndGlyphs">Khắc phục hệ thống từ xa</text>
<text x="1320.2" y="628.7" textLength="112.0" lengthAdjust="spacingAndGlyphs">khi <tspan font-weight="bold" font-size="9.2">KHÔNG CÓ INTERNET</tspan></text>
<text x="1320.2" y="661.0" textLength="50.0" lengthAdjust="spacingAndGlyphs">Hỗ trợ từ xa</text>
<text x="1433.5" y="674.0" textLength="78.0" lengthAdjust="spacingAndGlyphs" text-anchor="end"><tspan font-weight="bold" font-size="9.2">KHÔNG GIỚI HẠN</tspan></text>
</g>
<g fill="#2a1140">
<circle cx="1080.3" cy="708" r="6.4"/><circle cx="1180.8" cy="708" r="6.4"/><circle cx="1314.6" cy="708" r="6.4"/>
</g>
<path d="M1077.2,704.6 q-1.2,1.2 0.6,3.9 q2.2,3 4.6,3.4 q1.3,0.1 1.9,-1 l-1.8,-1.6 l-1.2,0.7 q-1.4,-0.8 -2.1,-2.4 l0.9,-0.9 l-1.3,-2.2 z" fill="#fff"/>
<g fill="none" stroke="#fff" stroke-width="0.7"><circle cx="1180.8" cy="708" r="4.3"/><ellipse cx="1180.8" cy="708" rx="1.9" ry="4.3"/><path d="M1176.5,708 h8.6 M1177.1,705.8 h7.4 M1177.1,710.2 h7.4"/></g>
<g fill="none" stroke="#fff" stroke-width="0.7"><circle cx="1314.6" cy="708" r="4.3"/><ellipse cx="1314.6" cy="708" rx="1.9" ry="4.3"/><path d="M1310.3,708 h8.6 M1310.9,705.8 h7.4 M1310.9,710.2 h7.4"/></g>
<g font-family="'DejaVu Sans','Liberation Sans',sans-serif" font-weight="bold" fill="#2a1140" font-size="10.4">
<text x="1092.7" y="712" textLength="62" lengthAdjust="spacingAndGlyphs">0909 156 177</text>
<text x="1193.3" y="712" textLength="94.5" lengthAdjust="spacingAndGlyphs">www.mitgroup.vn</text>
<text x="1326.8" y="712" textLength="113.5" lengthAdjust="spacingAndGlyphs">www.dichvubaotri.vn</text>
</g>
</svg>
<!--PV-END-->
<div class="abs" style="left:1009px;top:745px;width:497px;height:2px;background:#8f8f8f"></div>
<div class="btn" style="left:1069px;top:763px;width:46px;height:32px;line-height:32px;background:#f6f6f6;border-color:#ececec;border-radius:1px;color:#9a9a9a;font-size:13px">&lt;</div>
<div class="abs" style="left:1157px;top:778px;width:47px;height:5px;background:#e4e4e4;border:1px solid #d2d2d2"></div>
<div class="abs" style="left:1144px;top:767px;width:14px;height:26px;background:#0a78d4"></div>
<div class="btn" style="left:1245px;top:764px;width:45px;height:31px;line-height:31px;font-size:13px">&gt;</div>
<div class="t" style="left:1353px;top:766px;letter-spacing:-0.6px">Page 1 of 4</div>


</div>
</body>
</html>
